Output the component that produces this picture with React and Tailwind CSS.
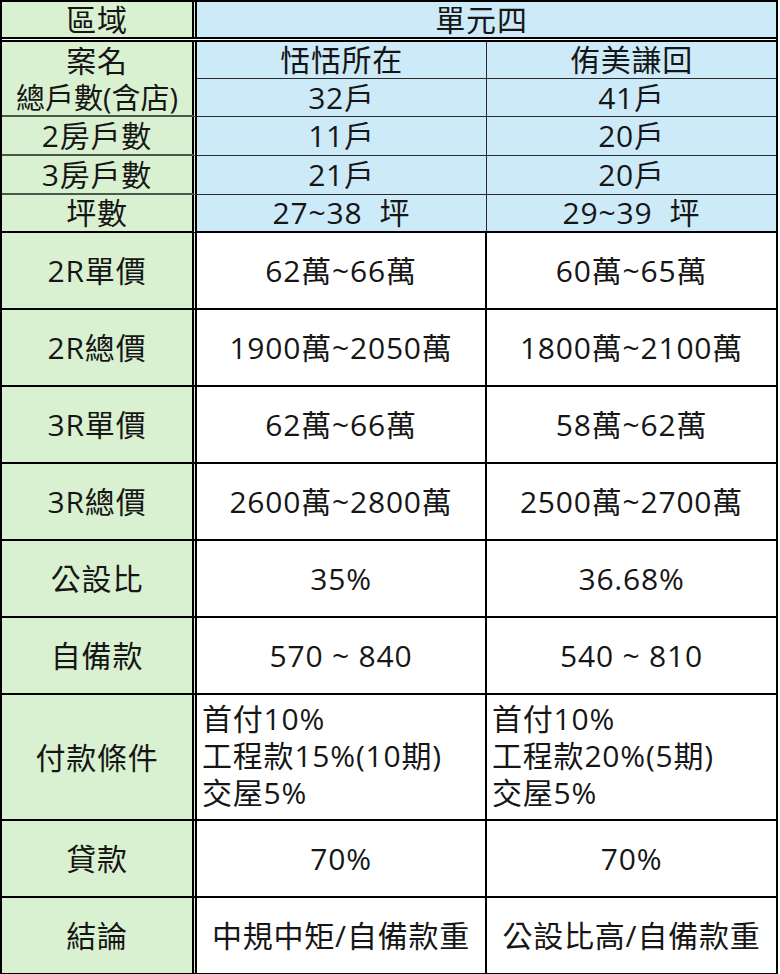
import React from 'react';

const font = { fontFamily: '"Open Sans", "Noto Sans CJK TC", "Noto Sans", sans-serif' };

const topRows = [
  { label: '案名', a: '恬恬所在', b: '侑美謙回', h: 'h-[37px]', labelLine: false },
  { label: '總戶數(含店)', a: '32戶', b: '41戶', h: 'h-[38px]', labelLine: true, tight: true },
  { label: '2房戶數', a: '11戶', b: '20戶', h: 'h-[39px]', labelLine: true },
  { label: '3房戶數', a: '21戶', b: '20戶', h: 'h-[39px]', labelLine: true },
  { label: '坪數', a: '27~38  坪', b: '29~39  坪', h: 'h-[38px]', labelLine: true, last: true },
];

const bigRows = [
  { label: '2R單價', a: '62萬~66萬', b: '60萬~65萬' },
  { label: '2R總價', a: '1900萬~2050萬', b: '1800萬~2100萬' },
  { label: '3R單價', a: '62萬~66萬', b: '58萬~62萬' },
  { label: '3R總價', a: '2600萬~2800萬', b: '2500萬~2700萬' },
  { label: '公設比', a: '35%', b: '36.68%' },
  { label: '自備款', a: '570 ~ 840', b: '540 ~ 810' },
  {
    label: '付款條件',
    a: ['首付10%', '工程款15%(10期)', '交屋5%'],
    b: ['首付10%', '工程款20%(5期)', '交屋5%'],
    tall: true,
  },
  { label: '貸款', a: '70%', b: '70%' },
  { label: '結論', a: '中規中矩/自備款重', b: '公設比高/自備款重' },
];

function Lines({ items }) {
  return (
    <div className="flex flex-col items-start justify-center w-full h-full pl-[5px] pb-[4px] leading-[37px]">
      {items.map((t) => (
        <span key={t}>{t}</span>
      ))}
    </div>
  );
}

export default function App() {
  return (
    <div className="w-[780px] h-[974px] bg-white text-[#161616] text-[30px] tracking-[0.8px]" style={font}>
      <div className="w-[778px] border-t-2 border-l-2 border-r-2 border-black">
        {/* header */}
        <div className="flex h-[40px] border-b-[5px] border-double border-black">
          <div className="w-[195px] shrink-0 bg-[#d9f1d0] border-r-[5px] border-double border-black flex items-center justify-center leading-none">
            區域
          </div>
          <div className="flex-1 bg-[#cdeaf8] flex items-center justify-center leading-none pr-[10px]">
            單元四
          </div>
        </div>

        {topRows.map((r) => (
          <div key={r.label} className={`flex ${r.h}`}>
            <div
              className={`w-[195px] shrink-0 bg-[#d9f1d0] border-r-[5px] border-double border-black flex items-center justify-center leading-none whitespace-nowrap ${
                r.tight ? 'tracking-normal text-[29px]' : ''
              } ${r.last ? 'border-b-2 border-b-black' : r.labelLine ? 'border-b-2 border-b-[#4a5a48]' : ''}`}
            >
              {r.label}
            </div>
            <div
              className={`w-[290px] shrink-0 bg-[#cdeaf8] border-r border-[#2a2a2a] flex items-center justify-center leading-none whitespace-pre ${
                r.last ? 'border-b-2 border-b-black' : 'border-b border-b-[#2a2a2a]'
              }`}
            >
              {r.a}
            </div>
            <div
              className={`flex-1 bg-[#cdeaf8] flex items-center justify-center leading-none whitespace-pre ${
                r.last ? 'border-b-2 border-b-black' : 'border-b border-b-[#2a2a2a]'
              }`}
            >
              {r.b}
            </div>
          </div>
        ))}

        {bigRows.map((r) => (
          <div key={r.label} className={`flex border-b-2 border-black ${r.tall ? 'h-[126px]' : 'h-[77px]'}`}>
            <div className="w-[195px] shrink-0 bg-[#d9f1d0] border-r-[5px] border-double border-black flex items-center justify-center whitespace-nowrap">
              {r.label}
            </div>
            <div className="w-[290px] shrink-0 border-r-2 border-black flex items-center justify-center whitespace-nowrap">
              {Array.isArray(r.a) ? <Lines items={r.a} /> : r.a}
            </div>
            <div className="flex-1 flex items-center justify-center whitespace-nowrap">
              {Array.isArray(r.b) ? <Lines items={r.b} /> : r.b}
            </div>
          </div>
        ))}
      </div>
    </div>
  );
}
